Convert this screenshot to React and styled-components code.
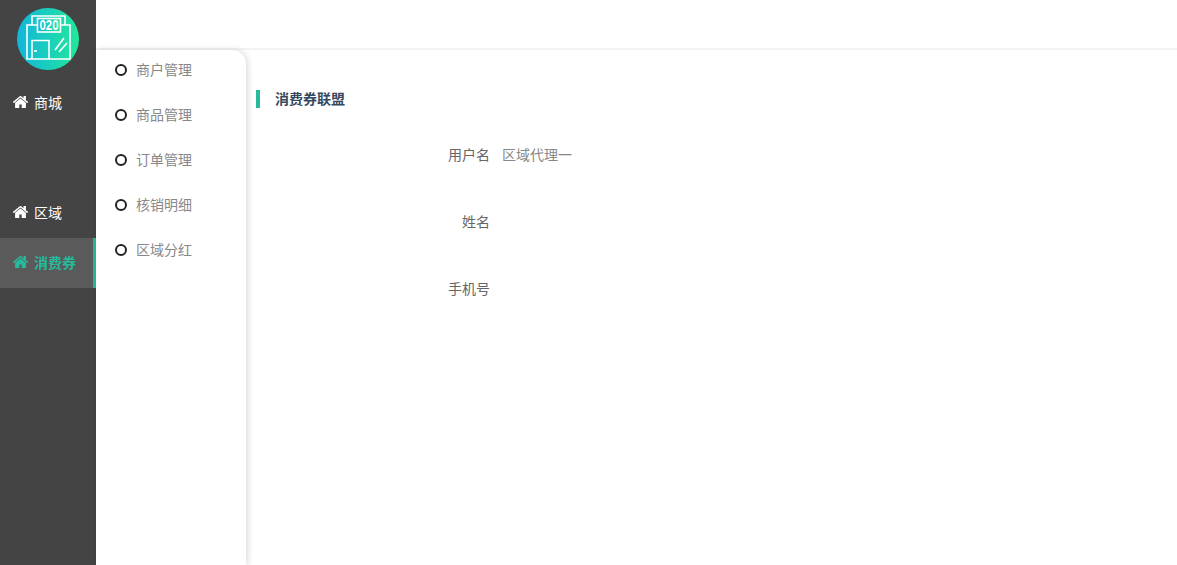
import React from 'react';
import styled, { createGlobalStyle } from 'styled-components';

const GlobalStyle = createGlobalStyle`
  html, body {
    margin: 0;
    height: 100%;
    background: #fff;
    font-family: "Liberation Sans", "Noto Sans CJK SC", sans-serif;
  }

  #root {
    height: 100%;
  }
`;

const Page = styled.div`
  display: flex;
  height: 565px;
  overflow: hidden;
`;

const Sidebar = styled.aside`
  flex: 0 0 96px;
  background: #444;
`;

const LogoBox = styled.div`
  height: 78px;
  display: flex;
  justify-content: center;
  padding-top: 8px;
  box-sizing: border-box;
`;

const NavItem = styled.div`
  height: 50px;
  display: flex;
  align-items: center;
  gap: 6px;
  padding: 0 0 2px 13px;
  box-sizing: border-box;
  margin-top: ${(p) => p.$gap || 0}px;
  font-size: 14px;
  font-weight: ${(p) => (p.$active ? 700 : 400)};
  color: ${(p) => (p.$active ? '#26b99a' : '#fff')};
  background: ${(p) => (p.$active ? '#5a5a5a' : 'transparent')};
  border-right: ${(p) => (p.$active ? '3px solid #26b99a' : 'none')};
`;

const HomeSvg = styled.svg`
  width: 15px;
  height: 12px;
  margin-top: -1px;
  fill: currentColor;
  flex: none;
`;

const Content = styled.div`
  flex: 1;
  display: flex;
  flex-direction: column;
  min-width: 0;
`;

const TopBar = styled.header`
  height: 48px;
  flex: none;
  border-bottom: 2px solid #f3f3f3;
`;

const Body = styled.div`
  flex: 1;
  display: flex;
  min-height: 0;
`;

const SubMenu = styled.nav`
  flex: 0 0 150px;
  background: #fff;
  border-top-right-radius: 14px;
  box-shadow: 2px 0 6px rgba(0, 0, 0, 0.14);
  z-index: 1;
`;

const SubList = styled.div`
  margin-top: -4px;
`;

const SubItem = styled.div`
  height: 45px;
  display: flex;
  align-items: center;
  gap: 9px;
  padding-left: 19px;
  font-size: 14px;
  color: #888;
`;

const Dot = styled.span`
  width: 8px;
  height: 8px;
  margin-top: 3px;
  border: 2px solid #222;
  border-radius: 50%;
`;

const Main = styled.main`
  flex: 1;
  padding: 40px 0 0 10px;
`;

const Title = styled.h2`
  margin: 0 0 32px;
  height: 18px;
  line-height: 18px;
  padding-left: 15px;
  border-left: 4px solid #26b99a;
  font-size: 14px;
  font-weight: 700;
  color: #34495e;
`;

const Row = styled.div`
  display: flex;
  height: 67px;
  font-size: 14px;
  line-height: 30px;
`;

const Label = styled.label`
  width: 234px;
  text-align: right;
  color: #666;
`;

const Value = styled.span`
  margin-left: 12px;
  color: #888;
`;

const Logo = () => (
  <svg width="62" height="62" viewBox="0 0 62 62">
    <defs>
      <linearGradient id="logoFill" x1="0" y1="0" x2="1" y2="0">
        <stop offset="0" stopColor="#12b5dc" />
        <stop offset="1" stopColor="#22e89a" />
      </linearGradient>
    </defs>
    <circle cx="31" cy="31" r="31" fill="url(#logoFill)" />
    <g fill="none" stroke="#fff" strokeWidth="1.6">
      <path d="M15 17V8H48V17" />
      <path d="M10 17H53V51H10Z" />
      <rect x="20.5" y="10.5" width="23" height="13.5" fill="url(#logoFill)" />
      <path d="M15 51V32.5H32V51" />
      <path d="M17 43H20" />
      <path d="M38 42L47 30M42 44L50 35" />
    </g>
    <text
      x="32"
      y="22"
      fill="#fff"
      fontSize="14"
      textAnchor="middle"
      textLength="19"
      lengthAdjust="spacingAndGlyphs"
      fontFamily="Liberation Sans, sans-serif"
      fontWeight="700"
    >
      020
    </text>
  </svg>
);

const HomeIcon = () => (
  <HomeSvg viewBox="97 256 1598 1280" preserveAspectRatio="none">
    <path d="M1472 992v480q0 26-19 45t-45 19h-384v-384h-256v384h-384q-26 0-45-19t-19-45v-480q0-1 .5-3t.5-3l575-474 575 474q1 2 1 6zm223-69l-62 74q-8 9-21 11h-3q-13 0-21-7l-692-577-692 577q-12 8-24 7-13-2-21-11l-62-74q-8-10-7-23.5t11-21.5l719-599q32-26 76-26t76 26l244 204v-195q0-14 9-23t23-9h192q14 0 23 9t9 23v408l219 182q10 8 11 21.5t-7 23.5z" />
  </HomeSvg>
);

const subItems = ['商户管理', '商品管理', '订单管理', '核销明细', '区域分红'];

const fields = [
  { label: '用户名', value: '区域代理一' },
  { label: '姓名', value: '' },
  { label: '手机号', value: '' },
];

export default function App() {
  return (
    <Page>
      <GlobalStyle />
      <Sidebar>
        <LogoBox>
          <Logo />
        </LogoBox>
        <NavItem>
          <HomeIcon />
          商城
        </NavItem>
        <NavItem $gap={60}>
          <HomeIcon />
          区域
        </NavItem>
        <NavItem $active>
          <HomeIcon />
          消费券
        </NavItem>
      </Sidebar>
      <Content>
        <TopBar />
        <Body>
          <SubMenu>
            <SubList>
              {subItems.map((item) => (
                <SubItem key={item}>
                  <Dot />
                  {item}
                </SubItem>
              ))}
            </SubList>
          </SubMenu>
          <Main>
            <Title>消费券联盟</Title>
            {fields.map((field) => (
              <Row key={field.label}>
                <Label>{field.label}</Label>
                <Value>{field.value}</Value>
              </Row>
            ))}
          </Main>
        </Body>
      </Content>
    </Page>
  );
}
